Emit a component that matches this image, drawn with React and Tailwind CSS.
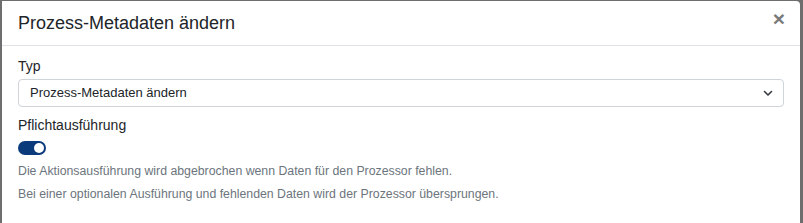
import React from 'react';

const font = { fontFamily: '"Liberation Sans", Arial, sans-serif' };

export default function App() {
    return (
        <div className="w-[803px] h-[223px] bg-[#6e6e6e] flex overflow-hidden pl-[2px] pt-[1px] pr-[3px]" style={font}>
            <div className="flex-1 bg-white rounded-tr-[4px] flex flex-col">
                <div className="h-[45px] flex items-center justify-between px-4 border-b border-[#dee2e6]">
                    <h5 className="text-[18px] leading-[24px] text-[#212529]">Prozess-Metadaten ändern</h5>
                    <button className="text-[21px] font-bold leading-none text-[#7a7a7a] -mr-[1px] -mt-[9px]">×</button>
                </div>
                <div className="px-4 pt-[10px] flex flex-col text-[#212529]">
                    <label className="text-[14px] leading-[21px]">Typ</label>
                    <div className="mt-[2px] h-[28px] border border-[#ced4da] rounded-[4px] flex items-center justify-between pl-[11px] pr-[10px]">
                        <span className="text-[13px]">Prozess-Metadaten ändern</span>
                        <svg width="10" height="7" viewBox="0 0 10 7" fill="none" stroke="#343a40" strokeWidth="1.6" strokeLinecap="round" strokeLinejoin="round">
                            <path d="M1.5 1.5 L5 5 L8.5 1.5" />
                        </svg>
                    </div>
                    <label className="text-[14px] leading-[21px] mt-[8px]">Pflichtausführung</label>
                    <div className="mt-[5px] w-[28px] h-[14px] rounded-full bg-[#0c3b7c] flex items-center justify-end pr-[2px]">
                        <span className="w-[10px] h-[10px] rounded-full bg-white" />
                    </div>
                    <p className="text-[12.3px] leading-[18px] text-[#6c757d] mt-[7px]">Die Aktionsausführung wird abgebrochen wenn Daten für den Prozessor fehlen.</p>
                    <p className="text-[12.3px] leading-[18px] text-[#6c757d] mt-[5px]">Bei einer optionalen Ausführung und fehlenden Daten wird der Prozessor übersprungen.</p>
                </div>
            </div>
        </div>
    );
}
